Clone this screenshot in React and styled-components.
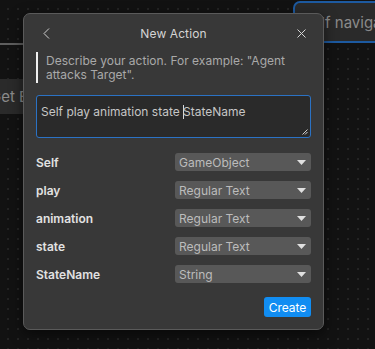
import React from "react";
import styled, { createGlobalStyle } from "styled-components";

const Global = createGlobalStyle`
  html, body { margin: 0; padding: 0; }
  body {
    width: 375px;
    height: 349px;
    overflow: hidden;
    background-color: #121212;
    font-family: Inter, "Noto Sans", sans-serif;
  }
`;

const Canvas = styled.div`
  position: relative;
  width: 375px;
  height: 349px;
  overflow: hidden;
  background-color: #121212;
  background-image: radial-gradient(circle, #2a2a2a 0.6px, transparent 1px);
  background-size: 10px 10px;
  background-position: 3px 4px;
`;

const Node = styled.div`
  position: absolute;
  box-sizing: border-box;
  display: flex;
  align-items: center;
  background: #2a2a2a;
  color: #8a8a8a;
  font-size: 15px;
  white-space: nowrap;
  padding-left: ${(p) => p.$pad}px;
  border: ${(p) => (p.$selected ? "2px solid #1d5aa0" : "none")};
  border-radius: ${(p) => (p.$selected ? "7px" : "0")};
`;

const Rule = styled.div`
  position: absolute;
  left: 0;
  top: 43px;
  width: 40px;
  height: 2px;
  background: #5e5e5e;
`;

const Dialog = styled.div`
  position: absolute;
  left: 23px;
  top: 13px;
  width: 301px;
  height: 317px;
  box-sizing: border-box;
  background: #383838;
  border: 1px solid #5a5a5a;
  border-radius: 7px;
  box-shadow: 0 4px 14px rgba(0, 0, 0, 0.55);
  padding: 0 12px 12px;
  display: flex;
  flex-direction: column;
`;

const Header = styled.div`
  height: 40px;
  display: flex;
  align-items: center;
  justify-content: space-between;
  padding: 1px 5px 0 5px;
  box-sizing: border-box;
`;

const Title = styled.div`
  color: #d4d4d4;
  font-size: 12px;
  letter-spacing: 0.1px;
`;

const IconBtn = styled.div`
  width: 10px;
  height: 10px;
  display: flex;
  align-items: center;
  justify-content: center;
`;

const Desc = styled.div`
  border-left: 2px solid #f0f0f0;
  padding: 2px 0 1px 8px;
  color: #a9a9a9;
  font-size: 12px;
  line-height: 14px;
`;

const TextBox = styled.div`
  position: relative;
  margin-top: 12px;
  height: 44px;
  box-sizing: border-box;
  background: #2a2a2a;
  border: 1px solid #2b72c4;
  border-radius: 3px;
  padding: 8px 4px;
  color: #c6c6c6;
  font-size: 12px;
  line-height: 16px;
`;

const Caret = styled.span`
  display: inline-block;
  width: 1px;
  height: 14px;
  background: #d8d8d8;
  vertical-align: -3px;
  margin-right: -1px;
`;

const Grip = styled.svg`
  position: absolute;
  right: 2px;
  bottom: 2px;
`;

const Rows = styled.div`
  margin-top: 15px;
  display: flex;
  flex-direction: column;
  gap: 10px;
`;

const Row = styled.div`
  display: flex;
  align-items: center;
  justify-content: space-between;
  height: 18px;
`;

const Label = styled.div`
  color: #e2e2e2;
  font-size: 12px;
  font-weight: 600;
`;

const Select = styled.div`
  width: 136px;
  height: 18px;
  box-sizing: border-box;
  background: #585858;
  border-radius: 3px;
  display: flex;
  align-items: center;
  justify-content: space-between;
  padding: 0 5px 0 4px;
  color: #bcbcbc;
  font-size: 12px;
`;

const Footer = styled.div`
  margin-top: 14px;
  display: flex;
  justify-content: flex-end;
`;

const Button = styled.div`
  width: 47px;
  height: 20px;
  box-sizing: border-box;
  background: #118df2;
  color: #ffffff;
  border-radius: 3px;
  font-size: 12px;
  display: flex;
  align-items: center;
  justify-content: center;
`;

const rows = [
  ["Self", "GameObject"],
  ["play", "Regular Text"],
  ["animation", "Regular Text"],
  ["state", "Regular Text"],
  ["StateName", "String"],
];

export default function App() {
  return (
    <Canvas>
      <Global />
      <Node
        $selected
        $pad={8}
        style={{ left: 293, top: 1, width: 120, height: 42 }}
      >
        Self navigate to
      </Node>
      <Rule />
      <Node $pad={10} style={{ left: -20, top: 79, width: 70, height: 35 }}>
        Get Entity
      </Node>
      <Dialog>
        <Header>
          <IconBtn>
            <svg width="7" height="11" viewBox="0 0 7 11">
              <path d="M6 0.5 L1 5.5 L6 10.5" fill="none" stroke="#cfcfcf" strokeWidth="1" />
            </svg>
          </IconBtn>
          <Title>New Action</Title>
          <IconBtn>
            <svg width="9" height="9" viewBox="0 0 9 9">
              <path d="M0.5 0.5 L8.5 8.5 M8.5 0.5 L0.5 8.5" stroke="#d6d6d6" strokeWidth="1" />
            </svg>
          </IconBtn>
        </Header>
        <Desc>Describe your action. For example: "Agent attacks Target".</Desc>
        <TextBox role="textbox">
          Self play animation state <Caret />StateName
          <Grip width="6" height="6" viewBox="0 0 6 6">
            <path d="M0.5 5.5 L5.5 0.5 M3 5.5 L5.5 3" stroke="#d0d0d0" strokeWidth="1" />
          </Grip>
        </TextBox>
        <Rows>
          {rows.map(([label, type]) => (
            <Row key={label}>
              <Label>{label}</Label>
              <Select>
                <span>{type}</span>
                <svg width="9" height="5" viewBox="0 0 9 5">
                  <path d="M0 0 L9 0 L4.5 5 Z" fill="#e0e0e0" />
                </svg>
              </Select>
            </Row>
          ))}
        </Rows>
        <Footer>
          <Button>Create</Button>
        </Footer>
      </Dialog>
    </Canvas>
  );
}
